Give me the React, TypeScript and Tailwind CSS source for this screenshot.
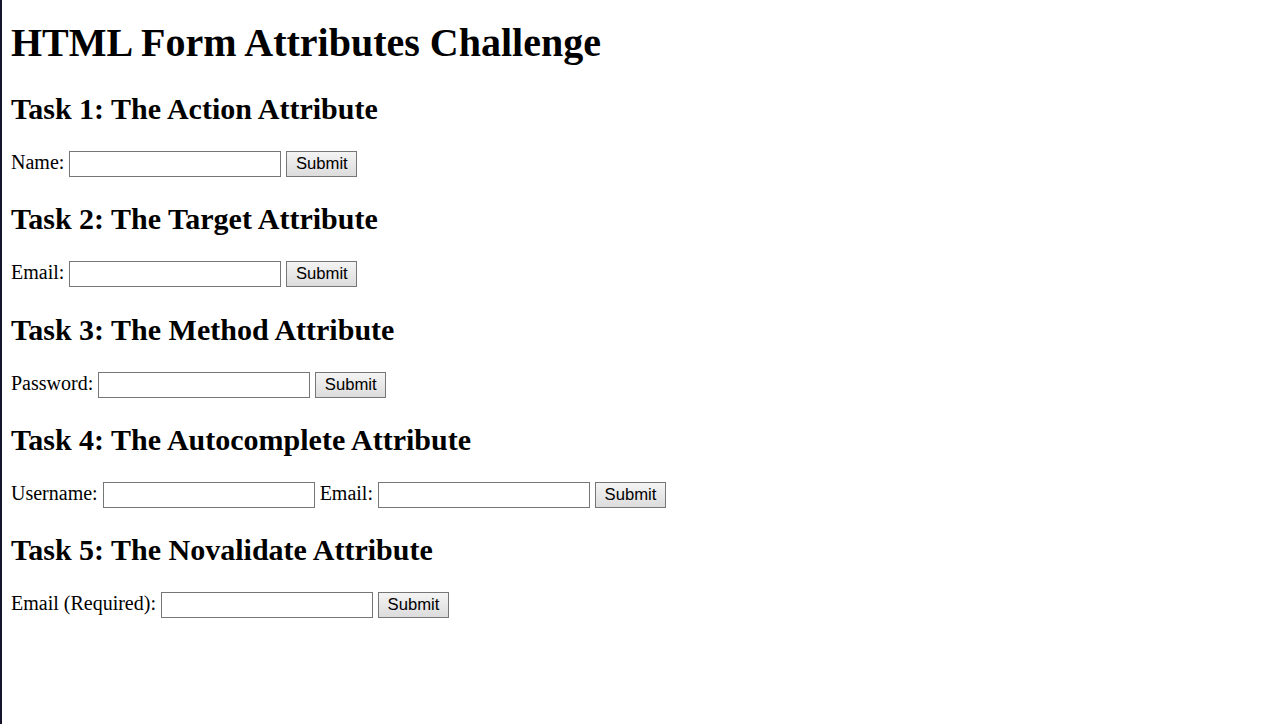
import React from 'react';

const inputClass =
  "inline-block align-baseline w-[212px] h-[26px] border border-[#767676] bg-white px-[2.5px] py-[1px] font-['Liberation_Sans',Arial,sans-serif] text-[16.67px] text-black";

const buttonClass =
  "inline-block align-baseline w-[71px] h-[26px] border border-[#767676] bg-gradient-to-b from-[#f4f4f4] to-[#dcdcdc] px-[7px] font-['Liberation_Sans',Arial,sans-serif] text-[16.67px] leading-[normal] text-black";

const tasks = [
  { title: 'Task 1: The Action Attribute', fields: ['Name:'] },
  { title: 'Task 2: The Target Attribute', fields: ['Email:'] },
  { title: 'Task 3: The Method Attribute', fields: ['Password:'] },
  { title: 'Task 4: The Autocomplete Attribute', fields: ['Username:', 'Email:'] },
  { title: 'Task 5: The Novalidate Attribute', fields: ['Email (Required):'] },
];

const App = () => {
  return (
    <div className="flow-root min-h-[724px] border-l-2 border-[#14142a] bg-white pl-[9px] font-['Liberation_Serif','Times_New_Roman',serif] text-[20px] leading-[normal] text-black">
      <h1 className="mt-[18.5px] mb-[26.8px] text-[40px] font-bold leading-[normal]">
        HTML Form Attributes Challenge
      </h1>
      {tasks.map(task => (
        <div key={task.title}>
          <h2 className="my-[24.9px] text-[30px] font-bold leading-[normal]">{task.title}</h2>
          <form onSubmit={e => e.preventDefault()} className="h-[26.4px] whitespace-nowrap">
            {task.fields.map(label => (
              <React.Fragment key={label}>
                {label}{' '}
                <input type="text" className={inputClass} />{' '}
              </React.Fragment>
            ))}
            <button type="submit" className={buttonClass}>Submit</button>
          </form>
        </div>
      ))}
    </div>
  );
};

export default App;
